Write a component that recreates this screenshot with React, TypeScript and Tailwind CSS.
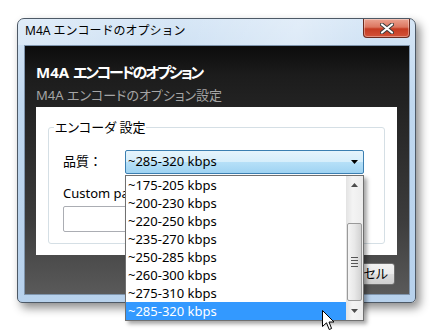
import React from "react";

const items = [
  "~175-205 kbps",
  "~200-230 kbps",
  "~220-250 kbps",
  "~235-270 kbps",
  "~250-285 kbps",
  "~260-300 kbps",
  "~275-310 kbps",
  "~285-320 kbps",
];

function CloseButton() {
  return (
    <div className="w-[47px] h-[19px] rounded-b-[4px] border border-t-0 border-[#6b2a1e] bg-[linear-gradient(to_bottom,#eba391_0%,#dc7660_45%,#c53b22_55%,#d35238_100%)] flex items-center justify-center shadow-[inset_0_0_0_1px_rgba(255,255,255,0.35)]">
      <svg width="14" height="11" viewBox="0 0 14 11">
        <path d="M2 1.5 L12 9.5 M12 1.5 L2 9.5" stroke="#3a3a3a" strokeWidth="4" strokeLinecap="round" />
        <path d="M2 1.5 L12 9.5 M12 1.5 L2 9.5" stroke="#ffffff" strokeWidth="2.2" strokeLinecap="round" />
      </svg>
    </div>
  );
}

function Cursor() {
  return (
    <svg width="13" height="21" viewBox="0 0 13 21" className="absolute left-[322px] top-[310px]">
      <path d="M0.5 0.5 L0.5 16.5 L4.5 12.8 L7.2 19.5 L9.6 18.5 L7 12 L12 12 Z" fill="#ffffff" stroke="#000000" strokeWidth="1" strokeLinejoin="miter" />
    </svg>
  );
}

function Dropdown() {
  return (
    <div className="absolute left-[125px] top-[175px] w-[239px] h-[146px] border border-[#707070] bg-white flex shadow-[3px_3px_4px_rgba(0,0,0,0.35)]">
      <div className="flex-1 flex flex-col">
        {items.map((t, i) => (
          <div
            key={t}
            className={
              i === items.length - 1
                ? "h-[18px] pl-[2px] leading-[18px] bg-[#3399ff] text-white"
                : "h-[18px] pl-[2px] leading-[18px] text-black"
            }
          >
            {t}
          </div>
        ))}
      </div>
      <div className="w-[17px] flex flex-col bg-[linear-gradient(to_right,#e3e3e3,#f4f4f4_40%,#ececec)]">
        <div className="h-[17px] flex items-center justify-center">
          <svg width="7" height="4" viewBox="0 0 7 4">
            <path d="M0 4 L3.5 0 L7 4 Z" fill="#4d4d4d" />
          </svg>
        </div>
        <div className="h-[30px]" />
        <div className="h-[78px] mx-[1px] rounded-[2px] border border-[#9a9a9a] bg-[linear-gradient(to_right,#f4f4f4,#e8e8e8_50%,#d2d2d2)] flex flex-col items-center justify-center gap-[2px]">
          <div className="w-[7px] h-[1px] bg-[#555]" />
          <div className="w-[7px] h-[1px] bg-[#555]" />
          <div className="w-[7px] h-[1px] bg-[#555]" />
          <div className="w-[7px] h-[1px] bg-[#555]" />
        </div>
        <div className="flex-1 flex items-center justify-center">
          <svg width="7" height="4" viewBox="0 0 7 4">
            <path d="M0 0 L7 0 L3.5 4 Z" fill="#4d4d4d" />
          </svg>
        </div>
      </div>
    </div>
  );
}

export default function App() {
  return (
    <div className="relative w-[437px] h-[336px] overflow-hidden bg-white text-black text-[13px] font-['Noto_Sans','Noto_Sans_CJK_JP',sans-serif] [font-feature-settings:'palt']">
      <div className="ml-[17px] mt-[18px] w-[399px] h-[285px] rounded-t-[7px] rounded-b-[5px] border border-[#4d5966] bg-[linear-gradient(to_bottom,#d6e6f6,#c0d8ef_30%,#b7d1ec)] shadow-[4px_5px_10px_rgba(0,0,0,0.45)] flex flex-col">
        <div className="h-[26px] flex items-start justify-between pl-[7px] pr-[5px] bg-[linear-gradient(100deg,rgba(255,255,255,0.25),rgba(255,255,255,0)_40%,rgba(255,255,255,0.3)_70%,rgba(255,255,255,0)_90%)] rounded-t-[6px]">
          <div className="mt-[3px] leading-[18px] text-[12px] text-black [font-feature-settings:normal]">M4A エンコードのオプション</div>
          <CloseButton />
        </div>
        <div className="flex-1 ml-[6px] mr-[5px] mb-[7px] border border-[#7f95ad] bg-[linear-gradient(to_bottom,#0c0c0c,#1c1c1c_12%,#262626_30%,#3c3c3c_70%,#5a5a5a)] flex flex-col pl-[11px]">
          <div className="mt-[15px] h-[22px] leading-[22px] text-[15px] font-bold text-white">
            M4A <span className="tracking-[-2.2px]">エンコードのオプション</span>
          </div>
          <div className="mt-[3px] h-[18px] leading-[18px] text-[13px] text-[#a5a5a5]">M4A エンコードのオプション設定</div>
          <div className="mt-[3px] w-[361px] h-[148px] bg-white px-[12px] pt-[20px]">
            <div className="h-[117px] rounded-[3px] border border-[#d5dfe5] flex flex-col">
              <div className="-mt-[10px] ml-[5px] w-fit px-[1px] bg-white leading-[18px] text-[13px]">エンコーダ 設定</div>
              <div className="mt-[14px] flex items-center h-[24px]">
                <div className="pl-[14px] w-[76px] text-[13px] [font-feature-settings:normal]">品質：</div>
                <div className="w-[239px] h-[24px] rounded-[2px] border border-[#3c7fb1] bg-[linear-gradient(to_bottom,#e6f4fc,#d5eefb_50%,#b6e0f8_50%,#9fd3f2)] flex items-center justify-between pl-[2px] pr-[5px]">
                  <span>~285-320 kbps</span>
                  <svg width="7" height="4" viewBox="0 0 7 4">
                    <path d="M0 0 L7 0 L3.5 4 Z" fill="#000" />
                  </svg>
                </div>
              </div>
              <div className="mt-[10px] ml-[14px] whitespace-nowrap leading-[18px]">Custom parameters：</div>
              <div className="mt-[4px] ml-[14px] w-[301px] h-[26px] rounded-[2px] border border-[#abadb3] bg-white" />
            </div>
          </div>
          <div className="mt-[8px] pr-[14px] flex justify-end gap-[8px]">
            <div className="w-[73px] h-[22px] rounded-[3px] border border-[#707070] bg-[linear-gradient(to_bottom,#f2f2f2,#ebebeb_50%,#dddddd_50%,#cfcfcf)] flex items-center justify-center text-[13px]">OK</div>
            <div className="w-[73px] h-[22px] rounded-[3px] border border-[#707070] bg-[linear-gradient(to_bottom,#f2f2f2,#ebebeb_50%,#dddddd_50%,#cfcfcf)] flex items-center justify-center text-[13px]">キャンセル</div>
          </div>
        </div>
      </div>
      <Dropdown />
      <Cursor />
    </div>
  );
}
